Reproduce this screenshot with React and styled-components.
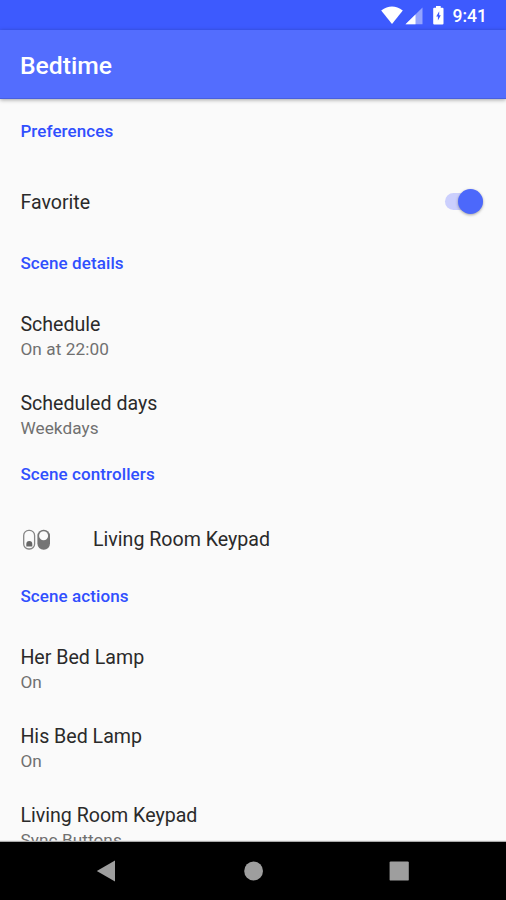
import styled, { createGlobalStyle } from "styled-components"

const sections = [
    { title: "Scene details", rows: [["Schedule", "On at 22:00"], ["Scheduled days", "Weekdays"]] },
    { title: "Scene controllers", controller: "Living Room Keypad" },
    { title: "Scene actions", rows: [["Her Bed Lamp", "On"], ["His Bed Lamp", "On"], ["Living Room Keypad", "Sync Buttons"]] },
]

const StatusIcons = () => (
    <svg width="64" height="20" viewBox="381 5 64 20">
        <path d="M381.2 10.6Q392 2.6 402.8 10.6L392 24Z" fill="#fff" />
        <path d="M422.5 7.5V24.3H405.5Z" fill="#fff" opacity=".45" />
        <path d="M415.5 14.5V24.3H405.5Z" fill="#fff" />
        <path d="M434.2 7.7H436V6H440.7V7.7H442.5Q443.5 7.7 443.5 8.7V23.6Q443.5 24.6 442.5 24.6H434.2Q433.2 24.6 433.2 23.6V8.7Q433.2 7.7 434.2 7.7Z" fill="#fff" />
        <path d="M439.2 11.3L436.2 16.6H437.9V20.6L440.8 15.2H439.2Z" fill="#3d5afe" />
    </svg>
)

const KeypadIcon = () => (
    <svg width="30" height="22" viewBox="21 528 30 22">
        <rect x="23.7" y="529.4" width="10.9" height="18.6" rx="5" fill="none" stroke="#858585" strokeWidth="1.3" />
        <path d="M26.3 545.6V543Q26.3 540 29.3 540T32.3 543V545.6Z" fill="#666" />
        <rect x="37.4" y="528.7" width="12.6" height="20" rx="6.2" fill="#757575" />
        <circle cx="43.6" cy="534.8" r="4.5" fill="#fafafa" />
    </svg>
)

const App = () => {
    return (
        <Screen>
            <GlobalStyle />
            <StatusBar>
                <StatusIcons />
                <Time>9:41</Time>
            </StatusBar>
            <Toolbar>Bedtime</Toolbar>
            <Content>
                <Heading>Preferences</Heading>
                <Favorite>
                    <span>Favorite</span>
                    <Switch>
                        <Thumb />
                    </Switch>
                </Favorite>
                {sections.map((section) => (
                    <section key={section.title}>
                        <Heading>{section.title}</Heading>
                        {section.controller && (
                            <Controller>
                                <KeypadIcon />
                                {section.controller}
                            </Controller>
                        )}
                        {section.rows?.map(([title, value]) => (
                            <Row key={title}>
                                <b>{title}</b>
                                <p>{value}</p>
                            </Row>
                        ))}
                    </section>
                ))}
            </Content>
            <NavBar>
                <svg width="20" height="24" viewBox="0 0 20 24">
                    <path d="M.8 12L19 1.5V22.5Z" fill="#9e9e9e" />
                </svg>
                <svg width="20" height="20" viewBox="0 0 20 20">
                    <circle cx="10.6" cy="10" r="9.4" fill="#9e9e9e" />
                </svg>
                <svg width="20" height="20" viewBox="0 0 20 20">
                    <rect x=".6" y=".4" width="19.2" height="19.2" rx="1.2" fill="#9e9e9e" />
                </svg>
            </NavBar>
        </Screen>
    )
}

export default App

const GlobalStyle = createGlobalStyle`
    * {
        box-sizing: border-box;
    }

    body {
        margin: 0;
    }
`

const Screen = styled.div`
    display: flex;
    flex-direction: column;
    height: 900px;
    overflow: hidden;
    background: #fafafa;
    color: #2a2a2a;
    font-family: Roboto, sans-serif;
`

const StatusBar = styled.div`
    display: flex;
    flex: none;
    align-items: center;
    justify-content: flex-end;
    gap: 8px;
    height: 30px;
    padding-right: 19px;
    background: #3d5afe;
`

const Time = styled.span`
    padding-top: 2px;
    color: white;
    font-size: 17.5px;
    font-weight: 500;
    line-height: 20px;
`

const Toolbar = styled.div`
    position: relative;
    flex: none;
    height: 69px;
    padding: 21px 20px 0;
    background: #536dfe;
    border-bottom: 1px solid #4860df;
    box-shadow: 0 1px 4px rgba(0, 0, 0, 0.35);
    color: white;
    font-size: 24.7px;
    font-weight: 500;
    line-height: 30px;
`

const Content = styled.div`
    flex: 1;
    min-height: 0;
    padding-top: 12px;
    overflow: hidden;
`

const Heading = styled.div`
    height: 53px;
    padding: 9px 20.4px 0;
    color: #304ffe;
    font-size: 17px;
    font-weight: 500;
    letter-spacing: 0.1px;
    line-height: 22px;
`

const Favorite = styled.div`
    display: flex;
    align-items: center;
    justify-content: space-between;
    height: 79px;
    padding: 0 23px 4px 20.4px;
    font-size: 19.6px;

    span {
        padding-top: 2px;
    }
`

const Switch = styled.div`
    display: flex;
    align-items: center;
    justify-content: flex-end;
    width: 38px;
    height: 17px;
    background: #cbcffd;
    border-radius: 9px;
`

const Thumb = styled.div`
    flex: none;
    width: 25px;
    height: 25px;
    background: #4c68fb;
    border-radius: 50%;
    box-shadow: 0 1px 3px rgba(0, 0, 0, 0.35);
`

const Controller = styled.div`
    display: flex;
    align-items: center;
    gap: 42px;
    height: 69px;
    padding: 0 21px 4px;
    font-size: 19.6px;
`

const Row = styled.div`
    height: 79px;
    padding: 16px 20.4px 0;

    b {
        display: block;
        font-size: 19.6px;
        font-weight: 400;
        line-height: 26px;
    }

    p {
        margin: 0;
        color: #707070;
        font-size: 17.2px;
        letter-spacing: 0.08px;
        line-height: 22px;
    }
`

const NavBar = styled.div`
    position: relative;
    display: flex;
    flex: none;
    align-items: center;
    justify-content: space-between;
    height: 58px;
    padding: 0 97px 1px 96px;
    background: black;
    box-shadow: 0 -1px 1px #aaa;
`
